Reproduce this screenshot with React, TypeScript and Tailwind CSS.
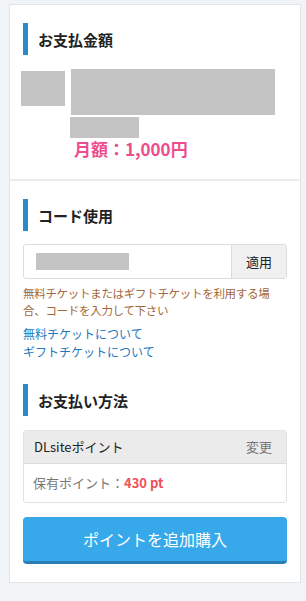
const JP = "font-['Noto_Sans_CJK_JP','Noto_Sans',sans-serif]";

function SectionTitle({ children }: { children: React.ReactNode }) {
  return (
    <div className="border-l-[5px] border-[#2a8bcb] pl-[10px] h-[32px] flex items-center">
      <h2 className="text-[15px] font-bold text-[#222] leading-none">{children}</h2>
    </div>
  );
}

export default function App() {
  return (
    <div className={`min-h-screen bg-[#f1f4f7] pt-[4px] pb-[19px] ${JP}`}>
      <div className="ml-[9px] w-[292px] bg-white border border-[#e3e6e9]">
        {/* 支払金額 */}
        <section className="px-[13px] pt-[18px] pb-[20px]">
          <SectionTitle>お支払金額</SectionTitle>
          <div className="flex mt-[14px] -ml-[2px]">
            <div className="w-[44px] h-[35px] mt-[2px] bg-[#c3c3c3]"></div>
            <div className="ml-[6px] flex flex-col">
              <div className="w-[204px] h-[46px] bg-[#c3c3c3]"></div>
              <div className="w-[69px] h-[21px] mt-[2px] -ml-[1px] bg-[#c3c3c3]"></div>
              <p className="mt-[1px] ml-[3px] text-[17px] leading-[20px] font-bold text-[#ee4d8c]">月額：1,000円</p>
            </div>
          </div>
        </section>

        {/* コード使用 */}
        <section className="border-t-2 border-[#ececec] px-[13px] pt-[18px] pb-[23px]">
          <SectionTitle>コード使用</SectionTitle>
          <div className="flex mt-[13px] h-[35px] rounded-[3px] border border-[#dcdcdc] overflow-hidden">
            <div className="flex-1 flex items-center pl-[12px]">
              <div className="w-[93px] h-[17px] bg-[#c3c3c3]"></div>
            </div>
            <button className="w-[55px] bg-[#f0f0f0] border-l border-[#dcdcdc] text-[13px] text-[#222]">適用</button>
          </div>
          <p className="mt-[6px] text-[11.5px] leading-[17px] text-[#a3683b] tracking-[-0.3px]">
            無料チケットまたはギフトチケットを利用する場合、コードを入力して下さい
          </p>
          <div className="mt-[6px] flex flex-col text-[12px] leading-[18px] text-[#1f77bd]">
            <a>無料チケットについて</a>
            <a>ギフトチケットについて</a>
          </div>
        </section>

        {/* 支払い方法 */}
        <section className="px-[13px] pb-[18px]">
          <SectionTitle>お支払い方法</SectionTitle>
          <div className="mt-[14px] rounded-[3px] border border-[#e2e2e2] overflow-hidden">
            <div className="h-[33px] bg-[#ebebeb] border-b border-[#dcdcdc] flex items-center justify-between px-[10px]">
              <span className="text-[13px] text-[#222]">DLsiteポイント</span>
              <span className="text-[13px] text-[#777] mr-[4px]">変更</span>
            </div>
            <div className="h-[38px] flex items-center px-[9px] text-[13px]">
              <span className="text-[#777]">保有ポイント：</span>
              <span className="font-bold text-[#f0505a]">430 pt</span>
            </div>
          </div>
          <button className="mt-[14px] w-full h-[47px] rounded-[4px] bg-[#37a9ea] border-b-[3px] border-[#2b7db5] text-white text-[16px]">
            ポイントを追加購入
          </button>
        </section>
      </div>
    </div>
  );
}
